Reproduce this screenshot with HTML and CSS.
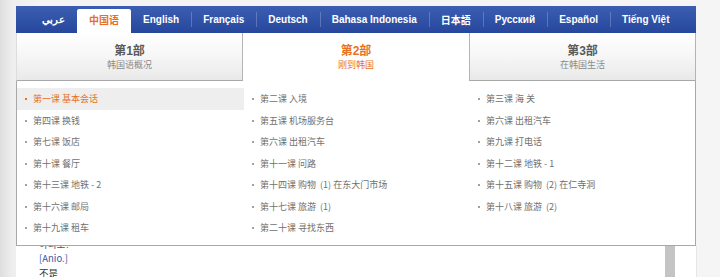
FILE: index.html
```html
<!DOCTYPE html>
<html lang="zh">
<head>
<meta charset="utf-8">
<link rel="stylesheet" href="styles.css">
</head>
<body>
<div class="page">
  <nav class="langbar">
    <a class="lang">عربي</a>
    <a class="lang active">中国语</a>
    <a class="lang">English</a>
    <a class="lang sep">Français</a>
    <a class="lang sep">Deutsch</a>
    <a class="lang sep">Bahasa Indonesia</a>
    <a class="lang sep">日本語</a>
    <a class="lang sep">Русский</a>
    <a class="lang sep">Español</a>
    <a class="lang sep">Tiếng Việt</a>
  </nav>
  <div class="parts">
    <div class="part part1"><div class="ptitle">第1部</div><div class="psub">韩国语概况</div></div>
    <div class="part part2 current"><div class="ptitle">第2部</div><div class="psub">刚到韩国</div></div>
    <div class="part part3"><div class="ptitle">第3部</div><div class="psub">在韩国生活</div></div>
  </div>
  <div class="panel">
    <ul class="lessons">
      <li class="on">第一课 基本会话</li>
      <li>第二课 入境</li>
      <li>第三课 海 关</li>
      <li>第四课 换钱</li>
      <li>第五课 机场服务台</li>
      <li>第六课 出租汽车</li>
      <li>第七课 饭店</li>
      <li>第六课 出租汽车</li>
      <li>第九课 打电话</li>
      <li>第十课 餐厅</li>
      <li>第十一课 问路</li>
      <li>第十二课 地铁 - 1</li>
      <li>第十三课 地铁 - 2</li>
      <li>第十四课 购物&nbsp; (1) 在东大门市场</li>
      <li>第十五课 购物&nbsp; (2) 在仁寺洞</li>
      <li>第十六课 邮局</li>
      <li>第十七课 旅游&nbsp; (1)</li>
      <li>第十八课 旅游&nbsp; (2)</li>
      <li>第十九课 租车</li>
      <li>第二十课 寻找东西</li>
    </ul>
  </div>
  <div class="content">
    <div class="text">
      <div class="line cut">아니오?</div>
      <div class="line roman">[Anio.]</div>
      <div class="line">不是</div>
    </div>
    <div class="scroll"></div>
  </div>
</div>
</body>
</html>
```

FILE: styles.css
```css
html, body {
  margin: 0;
  padding: 0;
  height: 277px;
  overflow: hidden;
}
body {
  background: linear-gradient(to right, #dedede 0, #eeeeee 12px, #f3f3f3 40px, #f5f5f5 100%);
  font-family: "Liberation Sans", "Noto Sans CJK SC", sans-serif;
}
.page {
  margin-left: 16px;
  width: 680px;
  padding-top: 6px;
}
.langbar {
  height: 27px;
  display: flex;
  align-items: stretch;
  padding-left: 14px;
  background: linear-gradient(to bottom, #3b5eb3 0, #2e50a5 60%, #27479d 100%);
  box-sizing: border-box;
}
.lang {
  position: relative;
  display: flex;
  align-items: center;
  padding: 0 12px;
  color: #ffffff;
  font-weight: bold;
  font-size: 10px;
  font-family: "Liberation Sans", "Noto Sans CJK SC", sans-serif;
  white-space: nowrap;
}
.lang.sep::before {
  content: "";
  position: absolute;
  left: 0;
  top: 6px;
  bottom: 6px;
  width: 1px;
  background: rgba(255, 255, 255, 0.22);
}
.lang.active {
  margin-top: 3px;
  background: #ffffff;
  color: #e8711f;
  border-radius: 2px 2px 0 0;
  padding-bottom: 3px;
}
.parts {
  display: grid;
  grid-template-columns: 227px 226px 227px;
  height: 48px;
}
.part {
  display: flex;
  flex-direction: column;
  align-items: center;
  padding-top: 11px;
  box-sizing: border-box;
  background: linear-gradient(to bottom, #ffffff 0, #f6f6f6 50%, #e9e9e9 100%);
  border-bottom: 1px solid #a8a8a8;
}
.part1 {
  border-left: 1px solid #dddddd;
  border-right: 1px solid #b4b4b4;
}
.part3 {
  border-left: 1px solid #b4b4b4;
  border-right: 1px solid #b4b4b4;
}
.part.current {
  background: #ffffff;
  border-bottom: none;
}
.ptitle {
  font-size: 12px;
  font-weight: bold;
  color: #5a5a5a;
  line-height: 14px;
}
.psub {
  font-size: 9px;
  color: #8a8a8a;
  line-height: 12px;
  margin-top: 1px;
}
.current .ptitle, .current .psub {
  color: #e8711f;
}
.panel {
  position: relative;
  z-index: 1;
  background: #ffffff;
  border: 1px solid #a8a8a8;
  border-top: none;
  padding: 7px 0 6px;
}
.lessons {
  list-style: none;
  margin: 0;
  padding: 0;
  display: grid;
  grid-template-columns: 227px 226px 226px;
  grid-auto-rows: 21.5px;
}
.lessons li {
  display: flex;
  align-items: center;
  padding-left: 16px;
  position: relative;
  font-size: 9px;
  color: #707070;
  font-family: "Noto Sans CJK SC", "Liberation Sans", sans-serif;
  white-space: nowrap;
}
.lessons li::before {
  content: "";
  position: absolute;
  left: 8px;
  top: 10px;
  width: 2px;
  height: 2px;
  background: #a0a0a0;
}
.lessons li.on {
  background: #eeeeee;
  color: #e8711f;
}
.lessons li.on::before {
  background: #e8711f;
}
.content {
  display: flex;
  justify-content: space-between;
  background: #ffffff;
  width: 681px;
  height: 40px;
  border-right: 1px solid #e6e6e6;
  box-sizing: border-box;
}
.text {
  padding-left: 23px;
  margin-top: -9px;
  font-size: 9.5px;
  font-family: "Noto Sans CJK SC", "Liberation Sans", sans-serif;
  color: #333333;
}
.line {
  line-height: 14.5px;
}
.line.cut {
  color: #555555;
}
.roman {
  color: #3b55a8;
}
.scroll {
  width: 10px;
  margin-right: 21px;
  background: #c4c4c4;
}
```
